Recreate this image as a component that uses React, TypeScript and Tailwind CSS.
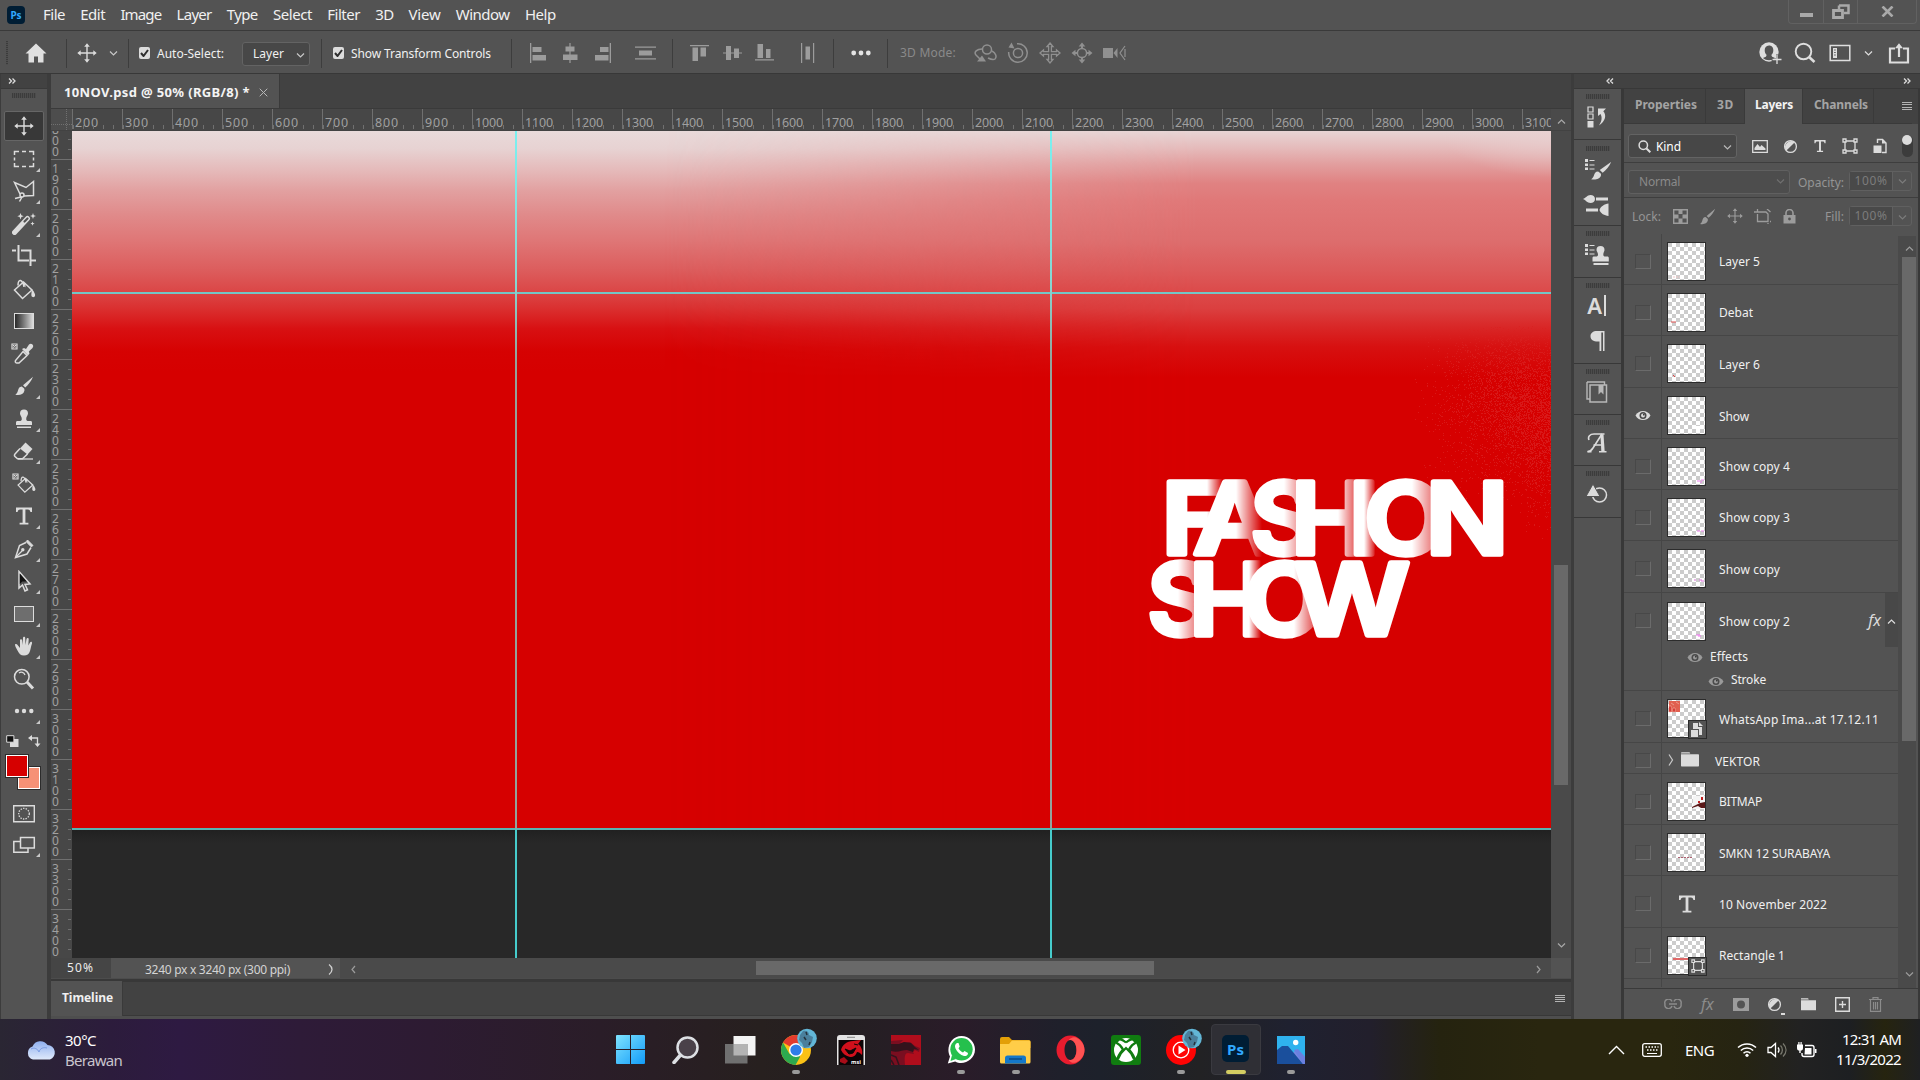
import React, { useLayoutEffect, useRef, useState } from "react";

type Kids = { children?: React.ReactNode };

/* Text set to a known advance width: the tracking is worked out from the measured width. */
function Fit({ w, className = "", children }: { w: number; className?: string; children: string }) {
  const ref = useRef<HTMLSpanElement>(null);
  const [ls, setLs] = useState(0);
  useLayoutEffect(() => {
    const el = ref.current;
    if (!el) return;
    el.style.letterSpacing = "0px";
    setLs((w - el.getBoundingClientRect().width) / children.length);
  }, [w, children]);
  return (
    <span ref={ref} className={"inline-block shrink-0 whitespace-pre " + className} style={{ letterSpacing: ls + "px" }}>
      {children}
    </span>
  );
}

function Svg({ w, h, className = "", children }: { w: number; h: number; className?: string } & Kids) {
  return (
    <svg width={w} height={h} viewBox={`0 0 ${w} ${h}`} fill="none" className={"shrink-0 " + className}>
      {children}
    </svg>
  );
}

const Chev = ({ d = "down", className = "" }: { d?: string; className?: string }) => (
  <Svg w={9} h={9} className={className}>
    <path
      d={d === "down" ? "M1 2.5L4.5 6L8 2.5" : d === "up" ? "M1 6.5L4.5 3L8 6.5" : d === "left" ? "M6 1L3 4.5L6 8" : "M3 1L6 4.5L3 8"}
      stroke="currentColor"
      strokeWidth="1.2"
    />
  </Svg>
);

const Sep = ({ className = "" }: { className?: string }) => <div className={"h-[29px] w-px shrink-0 bg-[#3d3d3d] " + className} />;

/* ------------------------------------------------------------ shared icons */

const MoveIcon = ({ s = 20 }: { s?: number }) => (
  <svg width={s} height={s} viewBox="0 0 20 20" className="shrink-0" fill="currentColor">
    <path d="M9.3 3h1.4v14H9.3zM3 9.3h14v1.4H3z" />
    <path d="M10 .3l2.8 3.4H7.2zM10 19.7l2.8-3.4H7.2zM.3 10l3.4-2.8v5.6zM19.7 10l-3.4-2.8v5.6z" />
  </svg>
);
const TypeIcon = ({ s = 20 }: { s?: number }) => (
  <svg width={s} height={s} viewBox="0 0 20 20" className="shrink-0" fill="currentColor">
    <path d="M2 1.5h16V6h-1.6c-.2-1.7-.8-2.6-2.6-2.6h-2.4v13.4h3v1.7H5.600v-1.7h3V3.400H6.200C4.400 3.400 3.800 4.300 3.600 6H2z" />
  </svg>
);
const BrushIcon = ({ s = 20 }: { s?: number }) => (
  <svg width={s} height={s} viewBox="0 0 20 20" className="shrink-0" fill="currentColor">
    <path d="M19 .8L9 9.300l2.200 2.300C14.500 8.500 17.500 5 19 .8zM7.800 10.500c-2.600.1-3.300 2-3.900 4.200-.4 1.600-1.200 3-2.600 4 4 .9 8.300-.2 9.100-3.900.2-1.300-.1-2.200-.5-2.500z" />
  </svg>
);
const StampIcon = ({ s = 20 }: { s?: number }) => (
  <svg width={s} height={s} viewBox="0 0 20 20" className="shrink-0" fill="currentColor">
    <path d="M10 .5a4 4 0 014 4c0 2-1.800 3-1.800 5.500 0 1.500.8 2 2.300 2h2c1 0 1.500.7 1.500 1.700V16H2v-2.300c0-1 .5-1.700 1.500-1.700h2c1.500 0 2.300-.5 2.300-2C7.800 7.500 6 6.500 6 4.500a4 4 0 014-4zM3 17.600h14v1.500H3z" />
  </svg>
);
const ShapeIcon = ({ s = 16 }: { s?: number }) => (
  <svg width={s} height={s} viewBox="0 0 16 16" className="shrink-0" fill="none" stroke="currentColor" strokeWidth="1.300">
    <path d="M3 3h10v10H3z" />
    <path d="M1 1h3v3H1zM12 1h3v3h-3zM1 12h3v3H1zM12 12h3v3h-3z" fill="#535353" />
  </svg>
);
const HalfIcon = () => (
  <Svg w={15} h={15}>
    <circle cx="7.500" cy="7.500" r="5.900" stroke="currentColor" strokeWidth="1.300" />
    <path d="M11.800 3.200A6.200 6.200 0 003.200 11.800z" fill="currentColor" />
  </Svg>
);
const EyeIcon = ({ className = "" }: { className?: string }) => (
  <Svg w={16} h={11} className={className}>
    <path d="M.5 5.500C3.500-.5 12.500-.5 15.500 5.500 12.500 11.500 3.500 11.500.5 5.500z" fill="currentColor" />
    <circle cx="8" cy="5.500" r="3.500" fill="#4a4a4a" />
    <circle cx="8" cy="5.500" r="2" fill="currentColor" />
    <circle cx="8.800" cy="4.700" r=".9" fill="#3a3a3a" />
  </Svg>
);
const Hamburger = () => (
  <div className="flex h-[8px] w-[10px] shrink-0 flex-col justify-between">
    <i className="h-px bg-[#b4b4b4]" />
    <i className="h-px bg-[#b4b4b4]" />
    <i className="h-px bg-[#b4b4b4]" />
    <i className="h-px bg-[#b4b4b4]" />
  </div>
);
const FolderIcon = () => (
  <Svg w={18} h={15}>
    <path d="M0 1.200C0 .5.500.2 1 .2h7.500l.8 1.300H0zM0 2.300h17c.6 0 1 .4 1 1V13.500c0 .6-.4 1-1 1H1c-.6 0-1-.4-1-1z" fill="#dcdcdc" />
  </Svg>
);
const Grip = ({ className = "" }: { className?: string }) => (
  <div className={"h-[5px] w-[24px] shrink-0 bg-[repeating-linear-gradient(90deg,#3c3c3c_0_1px,#4c4c4c_1px_2px)] " + className} />
);
const PsLogo = ({ className = "" }: { className?: string }) => (
  <div className={"flex shrink-0 items-center justify-center bg-[#001d34] font-bold text-[#31a8ff] " + className}>Ps</div>
);
const DoubleChev = ({ left = false }: { left?: boolean }) => (
  <Svg w={8} h={6}>
    <path d={left ? "M3.500.5L1 3l2.500 2.500M7 .5L4.500 3L7 5.500" : "M1 .5L3.500 3L1 5.500M4.500.5L7 3L4.500 5.500"} stroke="#dcdcdc" strokeWidth="1.300" />
  </Svg>
);

/* ---------------------------------------------------------------- top bars */

const menus: [string, number][] = [
  ["File", 22], ["Edit", 25], ["Image", 41], ["Layer", 35], ["Type", 31], ["Select", 39],
  ["Filter", 33], ["3D", 18], ["View", 32], ["Window", 54], ["Help", 31],
];

function MenuBar() {
  return (
    <div className="flex h-[30px] shrink-0 items-center bg-[#535353] pl-[7px]">
      <PsLogo className="h-[18px] w-[18px] rounded-[4px] text-[10px]" />
      <div className="mb-[2px] ml-[18px] flex items-center gap-[15.2px] text-[15px] text-[#f0f0f0]">
        {menus.map(([m, w]) => (
          <Fit key={m} w={w}>{m}</Fit>
        ))}
      </div>
      <div className="mr-[3px] ml-auto flex h-[24px] w-[129px] self-start rounded-b-[4px] border border-t-0 border-[#616161] text-[#a9a9a9]">
        <div className="flex w-[35px] items-center justify-center border-r border-[#616161]">
          <i className="mt-[6px] h-[4px] w-[13px] bg-[#a9a9a9]" />
        </div>
        <div className="flex w-[34px] items-center justify-center border-r border-[#616161]">
          <Svg w={18} h={16}>
            <path d="M7 1.500h9.500v7.500H12M7 1.500V5" stroke="currentColor" strokeWidth="2.500" />
            <path d="M1.500 6.500h9v7h-9z" stroke="currentColor" strokeWidth="2.800" />
          </Svg>
        </div>
        <div className="flex flex-1 items-center justify-center">
          <Svg w={13} h={11}>
            <path d="M1.500.5l10 10M11.500.5l-10 10" stroke="currentColor" strokeWidth="2.600" />
          </Svg>
        </div>
      </div>
    </div>
  );
}

const Check = ({ className = "" }: { className?: string }) => (
  <div className={"flex h-[12px] w-[11px] shrink-0 items-center justify-center rounded-[2px] bg-[#dcdcdc] " + className}>
    <Svg w={9} h={8}>
      <path d="M1 4l2.500 3L8 1" stroke="#2e2e2e" strokeWidth="2" />
    </Svg>
  </div>
);

function OptionsBar() {
  return (
    <div className="flex h-[42px] shrink-0 items-center bg-[#535353] pt-[2px]">
      <div className="ml-[6px] h-[24px] w-[2px] bg-[repeating-linear-gradient(180deg,#3c3c3c_0_1px,#4f4f4f_1px_2px)]" />
      <Svg w={22} h={20} className="ml-[17px] text-[#e0e0e0]">
        <path d="M11 .5L.5 10.500h3V19.500h5.500V13.500h4V19.500h5.500V10.500h3z" fill="currentColor" />
      </Svg>
      <Sep className="ml-[19px]" />
      <div className="ml-[10px] text-[#dcdcdc]"><MoveIcon /></div>
      <Chev className="ml-[12px] text-[#c8c8c8]" />
      <Sep className="ml-[10px]" />
      <Check className="ml-[10px]" />
      <Fit w={67} className="mt-[2px] ml-[7px] text-[12px] text-[#f0f0f0]">Auto-Select:</Fit>
      <div className="mt-[2px] ml-[18px] flex h-[24px] w-[68px] items-center justify-between rounded-[3px] border border-[#636363] bg-[#474747] pr-[4px] pl-[10px] text-[12px] text-[#f0f0f0]">
        <Fit w={31}>Layer</Fit>
        <Chev className="mt-[2px] text-[#c8c8c8]" />
      </div>
      <Sep className="ml-[11px]" />
      <Check className="ml-[11px]" />
      <Fit w={140} className="mt-[2px] ml-[7px] text-[12px] text-[#f0f0f0]">Show Transform Controls</Fit>
      <Sep className="ml-[20px]" />
      <div className="ml-[16px] flex items-center text-[#9c9c9c]">
        <Svg w={20} h={20}><path d="M2 0h1.300v20H2zM4.500 4h9v5h-9zM4.500 12h13.500v5.500H4.500z" fill="currentColor" /></Svg>
        <Svg w={20} h={20} className="ml-[12px]"><path d="M9.400 0h1.200v20H9.400zM5.500 3.500h9v5h-9zM3 11.500h14.500V17H3z" fill="currentColor" /></Svg>
        <Svg w={20} h={20} className="ml-[13px]"><path d="M16.700 0H18v20h-1.300zM7 4h8.500v5H7zM2 12h13.500v5.500H2z" fill="currentColor" /></Svg>
        <Svg w={22} h={20} className="ml-[22px]"><path d="M0 3.500h21v1.200H0zM0 15.300h21v1.200H0zM4 7.500h13v5H4z" fill="currentColor" /></Svg>
      </div>
      <Sep className="ml-[15px]" />
      <div className="ml-[17px] flex items-center text-[#9c9c9c]">
        <Svg w={20} h={20}><path d="M0 2h19v1.200H0zM2.500 4.500H8V18H2.500zM10.500 4.500H16V13.500h-5.500z" fill="currentColor" /></Svg>
        <Svg w={20} h={20} className="ml-[13px]"><path d="M0 9.400h19v1.200H0zM3 3h5v14H3zM11 5.500h5V15h-5z" fill="currentColor" /></Svg>
        <Svg w={20} h={20} className="ml-[12px]"><path d="M0 16.300h19v1.200H0zM2.500 1H8V15H2.500zM11 6h4.500v9H11z" fill="currentColor" /></Svg>
        <Svg w={20} h={20} className="ml-[23px]"><path d="M3 0h1.200v20H3zM15 0h1.200v20H15zM7.500 3.500h4.500v13H7.500z" fill="currentColor" /></Svg>
      </div>
      <Sep className="ml-[15px]" />
      <Svg w={20} h={6} className="ml-[17px]">
        <g fill="#e4e4e4"><circle cx="2.700" cy="3" r="2.400" /><circle cx="10" cy="3" r="2.400" /><circle cx="17.300" cy="3" r="2.400" /></g>
      </Svg>
      <Sep className="ml-[16px]" />
      <Fit w={56} className="ml-[12px] text-[12px] text-[#8a8a8a]">3D Mode:</Fit>
      <div className="ml-[18px] flex items-center gap-[10px] text-[#909090]">
        <Svg w={23} h={20}>
          <circle cx="13" cy="6.500" r="4.500" stroke="currentColor" strokeWidth="1.500" />
          <path d="M8 6C3 6-.5 9 2 12l4 4M18 8c4 2 5 6 3 8-2 1.500-5 0-7-1" stroke="currentColor" strokeWidth="1.500" />
          <path d="M3 18.500l9 0-4-6z" fill="currentColor" />
        </Svg>
        <Svg w={22} h={22}>
          <circle cx="11" cy="11" r="4.600" stroke="currentColor" strokeWidth="1.500" />
          <path d="M10 1.700a9.300 9.300 0 11-8.300 8.300" stroke="currentColor" strokeWidth="1.500" />
          <path d="M1.500 5.500L7.500 6.500 4.500.5z" fill="currentColor" />
        </Svg>
        <Svg w={22} h={22}>
          <path d="M11 1l3 3.500h-1.600v5.100h5.100V8L21 11l-3.500 3v-1.600h-5.100v5.100H14L11 21l-3-3.500h1.600v-5.100H4.500V14L1 11l3.500-3v1.600h5.100V4.500H8z" stroke="currentColor" strokeWidth="1.300" />
        </Svg>
        <Svg w={22} h={22}>
          <circle cx="11" cy="11" r="4.600" stroke="currentColor" strokeWidth="1.500" />
          <path d="M11 .5l3.300 4H12v2h-2v-2H7.700zM11 21.500l3.300-4H12v-2h-2v2H7.700zM.5 11l4-3.300V10h2v2h-2v2.300zM21.500 11l-4-3.300V10h-2v2h2v2.300z" fill="currentColor" />
        </Svg>
        <Svg w={23} h={20}>
          <path d="M0 5h10v10H0zM10.500 10l4-5v10z" fill="currentColor" />
          <path d="M22 3l-5 7 5 7M22 6v8" stroke="currentColor" strokeWidth="1.200" />
        </Svg>
      </div>
      <div className="mr-[10px] ml-auto flex items-center text-[#dedede]">
        <Svg w={24} h={24}>
          <circle cx="11" cy="11" r="9.700" fill="currentColor" />
          <path d="M11 4.500c-3 0-4.300 2.200-4.300 4.700 0 2 .8 3.500 1.800 4.600.3 1.700-.9 2.400-3.500 3.200 1.700 1.500 3.700 2.200 6 2.200s4.300-.7 6-2.200c-2.600-.8-3.800-1.500-3.500-3.200 1-1.100 1.800-2.600 1.800-4.600 0-2.500-1.300-4.700-4.300-4.700z" fill="#535353" />
          <path d="M13.500 17.500H18V13.500h6V24H14z" fill="#535353" />
          <path d="M19 14v9M14.500 18.500h9" stroke="currentColor" strokeWidth="1.300" />
        </Svg>
        <Svg w={22} h={22} className="ml-[12px]">
          <circle cx="9.500" cy="9.500" r="7.800" stroke="currentColor" strokeWidth="1.900" />
          <path d="M15 15l5.500 5" stroke="currentColor" strokeWidth="2.600" />
        </Svg>
        <Svg w={22} h={18} className="ml-[13px]">
          <path d="M1.200 1.500h19.600v15H1.200z" stroke="currentColor" strokeWidth="1.500" />
          <path d="M4 4h4v10H4z" fill="currentColor" />
          <path d="M5.200 6h1.500M5.200 8.500h1.500M5.200 11h1.500" stroke="#535353" />
        </Svg>
        <Chev className="ml-[13px]" />
        <Svg w={22} h={21} className="ml-[15px]">
          <path d="M7 5.500H2V19.500H20V5.500h-5" stroke="currentColor" strokeWidth="2.200" />
          <path d="M9.900 5h2.200v9H9.900zM11 .2l4 5H7z" fill="currentColor" />
        </Svg>
      </div>
    </div>
  );
}

/* ------------------------------------------------------------ left toolbar */

const Checker = () => (
  <g>
    <path d="M1 1h5v5H1z" stroke="#dcdcdc" strokeWidth="1.200" />
    <path d="M2 2h1.300v1.300H2zM4 2h1.300v1.300H4zM3 3.300h1v1H3zM2 4.300h1v1H2zM4.300 4.300h1v1h-1z" fill="#dcdcdc" />
  </g>
);
const Bucket = () => (
  <g>
    <path d="M11.500 4L20 12 10.500 20.500 2.500 12z" stroke="currentColor" strokeWidth="1.500" />
    <path d="M6 7.500C6 4 7 2 8.500 2.500S11.500 6 12 9" stroke="currentColor" strokeWidth="1.500" />
    <path d="M17 9l4.500 4c1 2 2 3.500 1.500 5-.5 1.600-3 1.500-3.500 0-.3-1.500 0-3 .2-5z" fill="currentColor" />
    <path d="M9.500 3.500l4 6V5.500z" fill="currentColor" />
  </g>
);

const tools: { key: string; corner: boolean; icon: React.ReactNode }[] = [
  { key: "move", corner: false, icon: <MoveIcon /> },
  { key: "marquee", corner: true, icon: <Svg w={22} h={18}><path d="M1.500 5V1.500H6M9 1.500h4M16 1.500h4.500V5M20.500 7.500v3M20.500 13v3.500H16M13 16.500H9M6 16.500H1.500V13M1.500 10.500v-3" stroke="currentColor" strokeWidth="1.500" /></Svg> },
  { key: "lasso", corner: true, icon: <Svg w={22} h={22}><path d="M7 14L1.500 2.500 13 7.500 20.500 1.500V15.500L11 16" stroke="currentColor" strokeWidth="1.500" /><circle cx="9" cy="15" r="2" stroke="currentColor" strokeWidth="1.500" /><path d="M8 17l-6 1.500M9 17l-2.500 4.500" stroke="currentColor" strokeWidth="1.500" /></Svg> },
  { key: "wand", corner: true, icon: <Svg w={24} h={22}><path d="M2.500 19.500L15.500 5.500" stroke="currentColor" strokeWidth="5" strokeLinecap="round" /><path d="M12.500 8.500l3-3" stroke="#535353" strokeWidth="2.200" strokeLinecap="round" /><path d="M8.500 0l.9 2.300 2.300.9-2.300.9-.9 2.300-.9-2.300L5.300 3.200l2.300-.9zM21 0l.8 2.200 2.200.8-2.200.8L21 6l-.8-2.200L18 3l2.200-.8zM20.500 8.500l.6 1.500 1.500.6-1.500.6-.6 1.500-.6-1.500-1.500-.6 1.500-.6z" fill="currentColor" /></Svg> },
  { key: "crop", corner: false, icon: <Svg w={24} h={22}><path d="M6.500 0V15.500H17M19.500 15.500H24M0 5.500H4M9 5.500h9.500V21" stroke="currentColor" strokeWidth="2" /></Svg> },
  { key: "bucket", corner: false, icon: <Svg w={24} h={22}><Bucket /></Svg> },
  { key: "gradient", corner: false, icon: <div className="h-[16px] w-[20px] border-[1.5px] border-[#dcdcdc] bg-linear-to-r from-[#2a2a2a] to-[#dcdcdc]" /> },
  { key: "sampler", corner: false, icon: <Svg w={24} h={21} className="mr-[3px]"><Checker /><path d="M12 8.500l4 4L8 20H5.500C4.500 20 4 19 4.500 17.500z" stroke="currentColor" strokeWidth="1.500" /><path d="M11 6l2-1 2 1 3-4.500c2-2 5 0 4 2.500-.5 1.500-3 3-4.200 4.500l.7 2-1.500 2z" fill="currentColor" /></Svg> },
  { key: "brush", corner: true, icon: <BrushIcon /> },
  { key: "stamp", corner: true, icon: <StampIcon /> },
  { key: "eraser", corner: true, icon: <Svg w={22} h={20}><path d="M12.500 1.500l7 6.500-5 5.500-7.500-6z" fill="currentColor" /><path d="M7 7.500l-5 5.500c-.8.900-.7 1.700 0 2.500l2.500 2.300h5l5-4.800" stroke="currentColor" strokeWidth="1.500" /><path d="M5 18h15" stroke="currentColor" strokeWidth="1.300" /></Svg> },
  { key: "pattern", corner: false, icon: <Svg w={24} h={22}><Checker /><g transform="translate(4 2) scale(.84)"><Bucket /></g></Svg> },
  { key: "type", corner: true, icon: <TypeIcon /> },
  { key: "pen", corner: true, icon: <Svg w={20} h={20}><path d="M13.500 1l5.500 5.500-1.800 1.300L12.200 2.700z" fill="currentColor" stroke="currentColor" /><path d="M12 3.500L5.500 6.500 1.500 18.500 13 15l4-6.500" stroke="currentColor" strokeWidth="1.500" /><path d="M2 18l6-6" stroke="currentColor" strokeWidth="1.300" /><circle cx="8.800" cy="10.800" r="1.700" fill="currentColor" /></Svg> },
  { key: "select", corner: true, icon: <Svg w={20} h={22}><path d="M5 1.500V18l3.500-3 2.500 6 2.500-1.200-2.500-5.300 5-.5z" fill="#535353" stroke="currentColor" strokeWidth="1.500" /><path d="M5.800 3.500v10.500l2.500-2.500 4.500 0z" fill="#111" /></Svg> },
  { key: "rect", corner: true, icon: <div className="h-[16px] w-[20px] border-[1.5px] border-[#dcdcdc] bg-[#6e6e6e]" /> },
  { key: "hand", corner: true, icon: <Svg w={20} h={20}><path d="M1 8.500c.8-.8 2-.3 2.800.7L6 12V4.300c0-1.500 2-1.500 2.100 0L8.500 9l.5-7c.1-1.600 2.200-1.600 2.200 0L11.500 9l1-6c.3-1.500 2.300-1.300 2.200.2L14.300 9.500l1.700-3c.8-1.300 2.500-.5 2 1-1 3-1.300 5-2 7.500-.8 3-3 4.500-6 4.500-3.500 0-5-2-6.500-5C2.500 12.500 1 10.500 1 8.500z" fill="currentColor" /></Svg> },
  { key: "zoom", corner: false, icon: <Svg w={22} h={22}><circle cx="8.800" cy="8.800" r="7.300" stroke="currentColor" strokeWidth="1.500" /><path d="M6 5c2-1.500 5-.8 6 2" stroke="currentColor" strokeWidth="1.200" /><path d="M14 14l6 6.500" stroke="currentColor" strokeWidth="3" /></Svg> },
  { key: "more", corner: true, icon: <Svg w={20} h={6}><g fill="#dcdcdc"><circle cx="3" cy="3" r="2.200" /><circle cx="10" cy="3" r="2.200" /><circle cx="17.300" cy="3" r="2.200" /></g></Svg> },
];

function Toolbar() {
  return (
    <div className="flex w-[51px] shrink-0 border-r-[2px] border-[#3c3c3c] bg-[#3c3c3c] pl-px">
      <div className="flex w-[46px] flex-col bg-[#535353]">
        <div className="flex h-[14px] shrink-0 items-center bg-[#424242] pl-[7px]"><DoubleChev /></div>
        <div className="h-px bg-[#3a3a3a]" />
        <Grip className="mt-[4px] ml-[11px]" />
        <div className="mt-[12px] flex flex-col text-[#dcdcdc]">
          {tools.map((t) => (
            <div key={t.key} className="flex h-[32.5px] items-center">
              <div
                className={
                  "relative ml-[3px] flex h-[30px] w-[40px] items-center justify-center " +
                  (t.key === "move" ? "rounded-[2px] border border-[#666] bg-[#383838]" : "")
                }
              >
                {t.icon}
                {t.corner && (
                  <svg width="4" height="4" className="absolute right-[4px] bottom-[2px]"><path d="M4 0v4H0z" fill="#c8c8c8" /></svg>
                )}
              </div>
            </div>
          ))}
        </div>
        <div className="mt-[7px] flex justify-between pr-[6px] pl-[5px]">
          <Svg w={13} h={12}><path d="M4 4h8.500v8H4z" fill="#dcdcdc" /><path d="M.7.700h7.200v6.500H.7z" fill="#111" stroke="#dcdcdc" /></Svg>
          <Svg w={13} h={12}><path d="M3 3h6.500v6" stroke="#dcdcdc" strokeWidth="1.300" /><path d="M4 0v6L0 3zM6.500 8.500h6L9.500 12z" fill="#dcdcdc" /></Svg>
        </div>
        <div className="relative mt-[7px] ml-[4px] h-[37px] w-[37px]">
          <div className="absolute top-[12px] left-[12px] h-[24px] w-[24px] border border-[#2c2c2c] bg-white p-px"><div className="h-full bg-[#f69176]" /></div>
          <div className="absolute top-0 left-0 h-[24px] w-[24px] border border-[#2c2c2c] bg-white p-px"><div className="h-full bg-[#d60000]" /></div>
        </div>
        <div className="mt-[14px] ml-[12px] flex flex-col gap-[13px]">
          <Svg w={22} h={18}>
            <path d="M.7.800h20.600v15.900H.7z" stroke="#dcdcdc" strokeWidth="1.400" />
            <circle cx="11" cy="8.700" r="5.300" stroke="#dcdcdc" strokeWidth="1.300" strokeDasharray="1.400 1.200" />
          </Svg>
          <Svg w={27} h={21}>
            <path d="M7.500 5.500H.8V16.300H15v-4" stroke="#dcdcdc" strokeWidth="1.500" />
            <path d="M7.500 1.500h13.800v10.500H7.500z" fill="#535353" stroke="#dcdcdc" strokeWidth="1.500" />
            <path d="M27 17v4h-4z" fill="#c8c8c8" />
          </Svg>
        </div>
      </div>
    </div>
  );
}

/* --------------------------------------------------------- document window */

const hMarks = Array.from({ length: 30 }, (_, i) => 200 + i * 100);
const vMarks = Array.from({ length: 17 }, (_, i) => 1800 + i * 100);

const Ticks = () => (
  <div className="absolute bottom-0 left-0 h-[4px] w-[50px] bg-[repeating-linear-gradient(90deg,#707070_0_1px,transparent_1px_10px)]" />
);

function HRuler() {
  return (
    <div className="flex h-[21px] shrink-0 bg-[#474747]">
      <div className="relative w-[21px] shrink-0 bg-[#4d4d4d]">
        <i className="absolute top-0 right-[5px] h-full border-r border-dotted border-[#707070]" />
        <i className="absolute bottom-[5px] left-0 w-full border-b border-dotted border-[#707070]" />
      </div>
      <div className="flex w-[1479px] overflow-hidden">
        {hMarks.map((n) => (
          <div key={n} className="relative h-[20px] w-[50px] shrink-0 border-l border-[#707070] pt-[5px] pl-[2px] text-[12.500px] leading-[17px] text-[#a0a0a0]">
            <Fit w={n < 1000 ? 24 : 28}>{String(n)}</Fit>
            <Ticks />
          </div>
        ))}
      </div>
      <div className="flex w-[20px] items-center justify-center bg-[#4a4a4a] pt-[4px] pl-px text-[#a8a8a8]"><Chev d="up" /></div>
    </div>
  );
}

function VRuler() {
  return (
    <div className="w-[21px] shrink-0 overflow-hidden bg-[#474747]">
      <div className="-mt-[22px]">
        {vMarks.map((n) => (
          <div key={n} className="flex h-[50px] justify-between border-t border-[#707070] pt-[3px] pl-[1px] text-[12px] text-[#a0a0a0]">
            <div className="flex flex-col">
              {String(n).split("").map((c, i) => (
                <span key={i} className="h-[11px] leading-[11px]">{c}</span>
              ))}
            </div>
            <div className="-mt-[4px] mr-px h-[50px] w-[3px] bg-[repeating-linear-gradient(180deg,#707070_0_1px,transparent_1px_10px)]" />
          </div>
        ))}
      </div>
    </div>
  );
}

/* Letters of the artwork: glyph, left edge, width, baseline, fade start, fade end, opacity at the end. */
const letters: [string, number, number, number, number, number, number][] = [
  ["F", 1167, 58, 554, 1207, 1223, 0],
  ["A", 1193, 84, 554, 1236, 1262, 0],
  ["S", 1252, 62, 554, 1284, 1298, 0.6],
  ["H", 1296, 68, 554, 1338, 1362, 0.1],
  ["I", 1354, 21, 554, 1364, 1375, 0.1],
  ["O", 1366, 79, 554, 1412, 1436, 0.4],
  ["N", 1431, 72, 554, 1600, 1601, 1],
  ["S", 1149, 62, 634.5, 1178, 1196, 0.5],
  ["H", 1194, 68, 634.5, 1249, 1261, 0],
  ["O", 1246, 77, 634.5, 1294, 1318, 0.2],
  ["W", 1294, 116, 634.5, 1600, 1601, 1],
];

function Letter({ row, i }: { row: (typeof letters)[number]; i: number }) {
  const [c, x, w, y, a, b, o] = row;
  const [box, setBox] = useState({ l: 0, w: 70 });
  useLayoutEffect(() => {
    const ctx = document.createElement("canvas").getContext("2d");
    if (!ctx) return;
    ctx.font = "600 99px Inter";
    const m = ctx.measureText(c);
    setBox({ l: -m.actualBoundingBoxLeft, w: m.actualBoundingBoxLeft + m.actualBoundingBoxRight });
  }, [c]);
  const sx = (w - 5) / box.w;
  return (
    <g mask={`url(#mask${i})`}>
      <linearGradient id={"fade" + i} gradientUnits="userSpaceOnUse" x1={a} x2={b} y1="0" y2="0">
        <stop offset="0" stopColor="#fff" />
        <stop offset="1" stopColor="#fff" stopOpacity={o} />
      </linearGradient>
      <mask id={"mask" + i} maskUnits="userSpaceOnUse" x={x - 10} y={y - 90} width={w + 20} height="110">
        <rect x={x - 10} y={y - 90} width={w + 20} height="110" fill={`url(#fade${i})`} />
      </mask>
      <g transform={`translate(${x + 2.5 - box.l * sx} ${y}) scale(${sx} 1)`}>
        <text fontFamily="Inter" fontWeight="600" fontSize="99" fill="#fff" stroke="#fff" strokeWidth="5.500" strokeLinejoin="round">
          {c}
        </text>
      </g>
    </g>
  );
}

/* Sprayed dots, denser towards the right edge of the artboard. */
const speckles = (() => {
  let s = 7;
  const rnd = () => ((s = (s * 16807) % 2147483647) / 2147483647);
  const g = () => (rnd() + rnd() + rnd()) / 1.5 - 1;
  let d = "";
  for (let i = 0; i < 9000; i++) {
    const x = Math.round(1556 + g() * 150);
    const y = Math.round(400 + g() * 120 + (x > 1525 ? rnd() * 40 : 0));
    if (x < 1551 && y > 325) d += `M${x} ${y}h1v1h-1z`;
  }
  return d;
})();

function Canvas() {
  return (
    <div className="relative w-[1479px] shrink-0 overflow-hidden bg-[#282828]">
      <div className="relative h-[698px] overflow-hidden bg-[linear-gradient(180deg,#e9dada_0px,#e7d2d2_18px,#e5b9b9_40px,#e2a0a0_60px,#e08a8a_84px,#df7676_110px,#dc5c5c_140px,#db4646_161px,#da2c2c_180px,#d81012_198px,#d60202_220px,#d60000_240px)]">
        <div className="absolute inset-0 bg-[linear-gradient(180deg,#e7d4d4_0px,#e5b9b9_18px,#e29d9d_34px,#e08282_52px,#e07878_70px,#dd6d6d_110px,#dc5a5a_140px,#dc4a4a_161px,#db3f3f_178px,#d92828_195px,#d71010_216px,#d60000_246px)] mask-[linear-gradient(90deg,transparent_40%,black_76%)]" />
        <div className="absolute inset-x-0 top-0 h-[70px] bg-[radial-gradient(110px_46px_at_100%_0,#e8d0d0cc,transparent)]" />
      </div>
      <div className="h-[14px] bg-linear-to-b from-[#202020] to-[#282828]" />
      <svg className="absolute top-0 left-0" width="1479" height="827" viewBox="72 131 1479 827">
        <path d={speckles} fill="#da2020" fillOpacity="0.75" />
        {letters.map((l, i) => (
          <Letter key={i} row={l} i={i} />
        ))}
      </svg>
      <i className="absolute top-[161px] left-0 h-[2px] w-full bg-[#74c6c6]" />
      <i className="absolute top-[697px] left-0 h-[2px] w-full bg-[#58b4b2]" />
      <i className="absolute top-0 left-[443px] h-full w-[2px] bg-[linear-gradient(180deg,#7af0f0_0px,#86d8d4_150px,#93a39c_230px,#93a39c_697px,#46cccc_699px)]" />
      <i className="absolute top-0 left-[978px] h-full w-[2px] bg-[linear-gradient(180deg,#7af0f0_0px,#86d8d4_150px,#93a39c_230px,#93a39c_697px,#46cccc_699px)]" />
    </div>
  );
}

function DocumentArea() {
  return (
    <div className="flex w-[1520px] shrink-0 flex-col bg-[#424242]">
      <div className="flex h-[35px] shrink-0 items-center border-b border-[#3a3a3a]">
        <div className="flex h-full w-[229px] items-center border-r border-[#3a3a3a] bg-[#535353] pt-[2px] pl-[13px]">
          <Fit w={186} className="text-[13px] font-bold text-[#f4f4f4]">10NOV.psd @ 50% (RGB/8) *</Fit>
          <Svg w={9} h={9} className="ml-[9px]"><path d="M.7.700l7.600 7.600M8.300.700L.7 8.300" stroke="#b8b8b8" /></Svg>
        </div>
      </div>
      <HRuler />
      <div className="mt-px flex h-[827px] shrink-0">
        <VRuler />
        <Canvas />
        <div className="flex w-[20px] flex-col items-center bg-[#4a4a4a] text-[#a8a8a8]">
          <div className="mt-[434px] h-[220px] w-[14px] bg-[#696969]" />
          <Chev className="mt-auto mb-[8px] ml-px" />
        </div>
      </div>
      <div className="flex h-[20px] shrink-0 items-center bg-[#4a4a4a] text-[12px]">
        <div className="flex h-full w-[60px] items-center bg-[#454545] pb-px pl-[16px] text-[#ececec]"><Fit w={27}>50%</Fit></div>
        <div className="flex h-full w-[229px] items-center bg-[#535353] pl-[34px] text-[#d4d4d4]">
          <Fit w={145} className="mt-[3px]">3240 px x 3240 px (300 ppi)</Fit>
          <Svg w={6} h={11} className="mt-[2px] ml-[38px]"><path d="M1 .5c4 3 4 7 0 10" stroke="#d0d0d0" strokeWidth="1.300" /></Svg>
        </div>
        <Chev d="left" className="mt-[2px] ml-[9px] text-[#9c9c9c]" />
        <div className="ml-[398px] h-[14px] w-[398px] bg-[#696969]" />
        <Chev d="right" className="mt-[2px] ml-[380px] text-[#9c9c9c]" />
        <div className="ml-auto h-full w-[20px] bg-[#535353]" />
      </div>
      <div className="h-[4px] shrink-0 border-t border-[#4c4c4c] bg-[#383838]" />
      <div className="flex h-[34px] shrink-0 items-center border-b border-[#383838] pr-[6px]">
        <div className="flex h-[36px] w-[72px] items-center border-r border-[#3a3a3a] bg-[#535353] pb-[2px] pl-[11px]">
          <Fit w={51} className="text-[12px] font-bold text-[#f0f0f0]">Timeline</Fit>
        </div>
        <div className="ml-auto"><Hamburger /></div>
      </div>
      <div className="min-h-0 flex-1 bg-[#4e4e4e]" />
    </div>
  );
}

/* -------------------------------------------------------------- icon strip */

const DotList = () => <path d="M0 0h3v3H0zM0 4.500h3v2.500H0zM0 8.500h3v2.500H0zM4.500 1h5v1h-5zM4.500 5.500h5v1h-5zM4.500 9.500h5v1h-5z" fill="#dcdcdc" />;

const Group = ({ className, children }: { className: string } & Kids) => (
  <div className={"flex shrink-0 flex-col items-center border-b border-[#383838] pt-[5px] text-[#dcdcdc] " + className}>
    <Grip />
    {children}
  </div>
);

function IconStrip() {
  return (
    <div className="flex w-[47px] shrink-0 flex-col bg-[#535353]">
      <Group className="h-[51px]">
        <Svg w={20} h={22} className="mt-[7px] mr-[2px]">
          <path d="M1 1h5v5H1zM1 8h5v5H1z" stroke="currentColor" strokeWidth="1.200" /><path d="M.5 15h6v6.500h-6z" fill="currentColor" />
          <path d="M11 10V2.500h8l-2.700 2.700c3.500 4 2.200 9.800-4.300 14.300 3-4.500 3.300-8.500 1.500-11.500z" fill="currentColor" />
        </Svg>
      </Group>
      <Group className="h-[86px] pt-[6px]">
        <Svg w={26} h={22} className="mt-[8px]">
          <DotList />
          <g transform="translate(4.500 3) scale(1.080 .95)"><path d="M20 0L9.500 8.500 12.200 11.300C15.500 8.500 18.500 4.500 20 0zM8 10c-2.600.1-3.300 2-3.900 4.200-.4 1.600-1.200 3-2.600 4 4 .9 8.300-.2 9.100-3.900.2-1.300-.1-2.200-.5-2.500z" fill="currentColor" /></g>
        </Svg>
        <Svg w={27} h={21} className="mt-[14px] mr-[2px]">
          <path d="M0 4c3-1 4-4 7.500-4C10 0 12 1.500 12 4s-2 4-4.500 4C4 8 3 5 0 4zM13 2.500h12v3H13zM3 13.500h12v3H3zM25.500 8.500v12.500c-4-.5-8-2.500-9-6 1-3.500 5-6 9-6.500z" fill="currentColor" />
        </Svg>
      </Group>
      <Group className="h-[52px]">
        <Svg w={25} h={22} className="mt-[8px]">
          <DotList />
          <path d="M15.500 2a4 4 0 014 4c0 1.500-1.200 2.500-1.200 4.500 0 1.500.7 2 2 2h2c1 0 1.500.6 1.500 1.500v3.500H7.500V14c0-1 .5-1.500 1.500-1.500h2c1.300 0 2-.5 2-2C13 8.500 11.500 7.500 11.500 6a4 4 0 014-4zM8.500 19h15v2h-15z" fill="currentColor" />
        </Svg>
      </Group>
      <Group className="h-[86px]">
        <div className="mt-[6px] -ml-[2px] flex items-center">
          <span className="font-['Noto_Sans'] text-[22px] leading-[22px] font-semibold">A</span>
          <i className="ml-[2px] h-[21px] w-[1.500px] bg-[#dcdcdc]" />
        </div>
        <Svg w={15} h={20} className="mt-[15px]"><path d="M14.500 0v20H13V1.500h-1.700V20H9.500V10.500C4 11 .5 9 .5 5.300.5 2 3 0 7 0z" fill="currentColor" /></Svg>
      </Group>
      <Group className="h-[51px]">
        <Svg w={22} h={22} className="mt-[7px] mr-[2px] text-[#b8b8b8]">
          <path d="M1 1h17.500v3M1 1v17h3" stroke="currentColor" strokeWidth="1.400" /><path d="M4 4h16.500v17H4z" stroke="currentColor" strokeWidth="1.500" /><path d="M12.500 4h5v9.500l-2.500-2.500-2.500 2.500z" fill="currentColor" />
        </Svg>
      </Group>
      <Group className="h-[51px]">
        <Svg w={20} h={20} className="mt-[8px] mr-[2px]">
          <path d="M2 7C.5 3.500 3 1 7 1h10.500" stroke="currentColor" strokeWidth="1.600" />
          <path d="M14.500 1l1 17M15 1L6 15c-1.500 2.500-3 3.500-5.500 3.500" stroke="currentColor" strokeWidth="1.600" />
          <path d="M13.300 1.500h3.200l1.200 17h-3.200z" fill="currentColor" />
          <path d="M6.500 12h8M12 18.800h7.500M.5 18.800h4" stroke="currentColor" strokeWidth="1.400" />
        </Svg>
      </Group>
      <Group className="h-[52px]">
        <Svg w={22} h={19} className="mt-[8px] mr-[2px]"><circle cx="13.500" cy="11" r="7" stroke="currentColor" strokeWidth="1.500" /><path d="M7 0l7 12.500H0z" fill="currentColor" stroke="#535353" /></Svg>
      </Group>
    </div>
  );
}

/* ------------------------------------------------------------ layers panel */

const HideBox = () => <div className="h-[15px] w-[16px] border border-[#484848] border-r-[#6b6b6b] border-b-[#6b6b6b]" />;

const Thumb = ({ children }: Kids) => (
  <div className="relative h-[39px] w-[39px] shrink-0 border border-[#2c2c2c] bg-[conic-gradient(#fff_25%,#ccc_0_50%,#fff_0_75%,#ccc_0)] bg-[length:8px_8px]">
    <svg width="37" height="37" className="absolute top-0 left-0">{children}</svg>
  </div>
);

const Badge = ({ children }: Kids) => (
  <div className="absolute -right-px -bottom-px flex h-[19px] w-[19px] items-center justify-center border border-[#2c2c2c] bg-[#535353] text-[#dcdcdc]">{children}</div>
);

function Row({ h, on = false, children }: { h: string; on?: boolean } & Kids) {
  return (
    <div className={"flex shrink-0 border-b border-[#464646] " + h}>
      <div className="flex w-[38px] shrink-0 items-center justify-center border-r border-[#464646] pt-[4px]">
        {on ? <EyeIcon className="text-[#dcdcdc]" /> : <HideBox />}
      </div>
      <div className="flex flex-1 items-center pt-[4px] pl-[5px] text-[12px] text-[#f0f0f0]">{children}</div>
    </div>
  );
}

function Layers() {
  return (
    <div className="flex min-h-0 flex-1">
      <div className="flex w-[274px] flex-col overflow-hidden">
        <Row h="h-[51px]"><Thumb><path d="M5 34h2M8 34h2M11 34h1" stroke="#f3c8c8" /></Thumb><Fit w={41} className="mt-[2px] ml-[13px]">Layer 5</Fit></Row>
        <Row h="h-[51px]"><Thumb><path d="M3 28h5" stroke="#e05050" /></Thumb><Fit w={34} className="mt-[2px] ml-[13px]">Debat</Fit></Row>
        <Row h="h-[52px]"><Thumb><path d="M5 30.500h1M6 31.500h1" stroke="#e04040" /></Thumb><Fit w={41} className="mt-[3px] ml-[13px]">Layer 6</Fit></Row>
        <Row h="h-[51px]" on><Thumb><path d="M27 29h8v3h-8z" fill="#fff" /></Thumb><Fit w={30} className="mt-[4px] ml-[13px]">Show</Fit></Row>
        <Row h="h-[51px]"><Thumb><path d="M29 33h3M33 32h3M32 34h2" stroke="#ee80ee" /></Thumb><Fit w={71} className="mt-[2px] ml-[13px]">Show copy 4</Fit></Row>
        <Row h="h-[51px]"><Thumb><path d="M29 32h3M33 32h3" stroke="#ee80ee" /></Thumb><Fit w={71} className="mt-[2px] ml-[13px]">Show copy 3</Fit></Row>
        <Row h="h-[52px]"><Thumb><path d="M26 30h2M31 30h3M33 31h3" stroke="#dd70dd" /></Thumb><Fit w={61} className="mt-[3px] ml-[13px]">Show copy</Fit></Row>
        <div className="flex h-[98px] shrink-0 border-b border-[#464646] text-[12px] text-[#f0f0f0]">
          <div className="flex w-[38px] shrink-0 justify-center border-r border-[#464646] pt-[20px]"><HideBox /></div>
          <div className="flex flex-1 flex-col">
            <div className="flex h-[54px] items-center pl-[5px]">
              <div className="mt-[2px]"><Thumb><path d="M28 32h4M30 33h3" stroke="#f070f0" /></Thumb></div>
              <Fit w={71} className="mt-[4px] ml-[13px]">Show copy 2</Fit>
              <span className="mr-[4px] ml-auto text-[16px] text-[#dcdcdc] italic">fx</span>
              <div className="flex h-full w-[13px] items-center justify-center bg-[#484848] text-[#dcdcdc]"><Chev d="up" className="mt-[2px]" /></div>
            </div>
            <div className="flex h-[20px] items-center pl-[25px] text-[#9a9a9a]"><EyeIcon className="mt-px" /><Fit w={38} className="ml-[7px] text-[#f0f0f0]">Effects</Fit></div>
            <div className="mt-[3px] flex h-[20px] items-center pl-[46px] text-[#9a9a9a]"><EyeIcon className="mt-[2px]" /><Fit w={35} className="ml-[7px] text-[#f0f0f0]">Stroke</Fit></div>
          </div>
        </div>
        <Row h="h-[52px]">
          <div className="relative">
            <Thumb>
              <path d="M1 1h11v11H1z" fill="#e06050" /><path d="M1 6h2v6H1zM5 8h2v4H5zM8 2l3 2M3 3l3 2" fill="#c80808" stroke="#f6c0b0" strokeWidth=".6" />
            </Thumb>
            <Badge><Svg w={15} h={15}><path d="M3 1h5v4h4v8H9V7H3z" fill="currentColor" /><path d="M9 0l4 4H9zM1 8h7v7H1z" fill="currentColor" /></Svg></Badge>
          </div>
          <Fit w={160} className="mt-[3px] ml-[13px]">WhatsApp Ima...at 17.12.11</Fit>
        </Row>
        <Row h="h-[31px]">
          <Svg w={6} h={12} className="ml-[1px]"><path d="M1 .5l3.500 5.500L1 11.500" stroke="#c8c8c8" strokeWidth="1.200" /></Svg>
          <div className="mb-[2px] ml-[7px]"><FolderIcon /></div>
          <Fit w={45} className="mt-[3px] ml-[16px]">VEKTOR</Fit>
        </Row>
        <Row h="h-[51px]">
          <Thumb><path d="M25 13h12v13H25z" fill="#f4f4f4" /><path d="M33 14h2v3h-2zM30 18h2v2h-2z" fill="#c02020" /><path d="M24 24l8-4 5-1v6h-4l-3-2-6 2z" fill="#5a1818" /></Thumb>
          <Fit w={43} className="mt-[2px] ml-[13px]">BITMAP</Fit>
        </Row>
        <Row h="h-[51px]"><Thumb><path d="M10 23.500h14" stroke="#b06070" strokeDasharray="2 1" /></Thumb><Fit w={111} className="mt-[3px] ml-[13px]">SMKN 12 SURABAYA</Fit></Row>
        <Row h="h-[52px]">
          <div className="flex w-[39px] justify-center text-[#dcdcdc]"><TypeIcon /></div>
          <Fit w={108} className="mt-[3px] ml-[13px]">10 November 2022</Fit>
        </Row>
        <Row h="h-[51px]">
          <div className="relative"><Thumb><path d="M5 21h20v2H5z" fill="#e06868" /></Thumb><Badge><ShapeIcon s={14} /></Badge></div>
          <Fit w={66} className="mt-[2px] ml-[13px]">Rectangle 1</Fit>
        </Row>
        <div className="h-[8px] w-[38px] shrink-0 border-r border-[#464646]" />
      </div>
      <div className="mt-[2px] flex w-[18px] flex-col items-center bg-[#4a4a4a] text-[#9c9c9c]">
        <Chev d="up" className="mt-[8px] ml-[4px]" />
        <div className="mt-[4px] ml-[3px] h-[484px] w-[14px] bg-[#696969]" />
        <Chev className="mt-auto mb-[9px] ml-[4px]" />
      </div>
    </div>
  );
}

const Pct = ({ className }: { className: string }) => (
  <div className={"flex shrink-0 rounded-[3px] border border-[#606060] text-[12px] text-[#7c7c7c] " + className}>
    <div className="flex w-[43px] items-center justify-center border-r border-[#606060] bg-[#494949]"><Fit w={33}>100%</Fit></div>
    <div className="flex flex-1 items-center justify-center"><Chev className="mt-[2px]" /></div>
  </div>
);

function LayersPanel() {
  return (
    <div className="flex w-[294px] shrink-0 flex-col bg-[#535353]">
      <div className="flex h-[35px] shrink-0 bg-[#424242] pr-[6px] text-[12px] font-bold text-[#a4a4a4]">
        <div className="flex w-[82px] items-center border-r border-b border-[#3a3a3a] pb-[2px] pl-[11px]"><Fit w={62}>Properties</Fit></div>
        <div className="flex w-[39px] items-center border-r border-b border-[#3a3a3a] pb-[2px] pl-[11px]"><Fit w={17}>3D</Fit></div>
        <div className="flex w-[58px] items-center border-r border-[#3a3a3a] bg-[#535353] pb-[3px] pl-[10px] text-[#f4f4f4]"><Fit w={38}>Layers</Fit></div>
        <div className="flex w-[71px] items-center border-r border-b border-[#3a3a3a] pb-[2px] pl-[11px]"><Fit w={54}>Channels</Fit></div>
        <div className="flex flex-1 items-center justify-end border-b border-[#3a3a3a]"><Hamburger /></div>
      </div>
      <div className="flex h-[39px] shrink-0 items-center border-b border-[#3e3e3e] pt-[6px] pl-[4px] text-[#dcdcdc]">
        <div className="flex h-[24px] w-[109px] items-center rounded-[3px] border border-[#636363] bg-[#474747] pr-[4px] pl-[9px] text-[12px] text-white">
          <Svg w={13} h={13}><circle cx="5.300" cy="5.300" r="4.200" stroke="#dcdcdc" strokeWidth="1.500" /><path d="M8.500 8.500l3.800 3.800" stroke="#dcdcdc" strokeWidth="2" /></Svg>
          <Fit w={25} className="mt-px ml-[5px]">Kind</Fit>
          <Chev className="mt-[2px] ml-auto text-[#b8b8b8]" />
        </div>
        <div className="ml-[15px] flex items-center gap-[15px]">
          <Svg w={16} h={13}><path d="M.7.700h14.600v11.600H.7z" stroke="currentColor" strokeWidth="1.300" /><path d="M2.500 10V8l3-4 2.500 3 1.500-2 4 3.500V10z" fill="currentColor" /></Svg>
          <HalfIcon />
          <TypeIcon s={14} />
          <ShapeIcon />
          <Svg w={14} h={16}><path d="M4.500 5V1.500h5L13 5v9.500H9" stroke="currentColor" strokeWidth="1.400" /><path d="M9 1v4.500h4M.5 7.500h8V15h-8z" fill="currentColor" /></Svg>
        </div>
        <div className="ml-[15px] h-[22px] w-[11px] rounded-full bg-[#3c3c3c]"><div className="h-[10px] w-[10px] rounded-full bg-[#dcdcdc]" /></div>
      </div>
      <div className="flex h-[35px] shrink-0 items-center border-b border-[#3e3e3e] pl-[4px] text-[12px] text-[#8a8a8a]">
        <div className="mt-[3px] flex h-[24px] w-[162px] items-center justify-between rounded-[3px] border border-[#606060] bg-[#4d4d4d] pr-[4px] pl-[10px]">
          <Fit w={41}>Normal</Fit>
          <Chev className="text-[#707070]" />
        </div>
        <Fit w={46} className="mt-[5px] ml-[8px] text-[#959595]">Opacity:</Fit>
        <Pct className="mt-px ml-[5px] h-[20px] w-[63px]" />
      </div>
      <div className="flex h-[36px] shrink-0 items-center pl-[8px] text-[12px] text-[#959595]">
        <Fit w={29} className="mt-[2px]">Lock:</Fit>
        <div className="ml-[12px] flex items-center gap-[11px] text-[#9c9c9c]">
          <Svg w={15} h={15}><path d="M.7.700h13.600v13.600H.7z" stroke="currentColor" strokeWidth="1.400" /><path d="M5.500 1h4v4h-4zM1 5.500h4.500v4H1zM9.500 5.500H14v4H9.500zM5.500 9.500h4V14h-4z" fill="currentColor" /></Svg>
          <BrushIcon s={17} />
          <MoveIcon s={16} />
          <Svg w={17} h={15}><path d="M3.500 0v3M0 3h12l2 2v7.500H3.500V5M14 14v1M16 12.500h1M13 0l3.500 3" stroke="currentColor" strokeWidth="1.300" /></Svg>
          <Svg w={13} h={15} className="ml-[1px]"><path d="M.5 6h12v8.500H.5z" fill="currentColor" /><path d="M3 6V4a3.500 3.500 0 017 0v2" stroke="currentColor" strokeWidth="1.600" /><circle cx="6.500" cy="10" r="1.400" fill="#535353" /></Svg>
        </div>
        <Fit w={19} className="mt-[2px] ml-auto">Fill:</Fit>
        <Pct className="mr-[6px] ml-[5px] h-[20px] w-[63px]" />
      </div>
      <Layers />
      <div className="flex h-[31px] shrink-0 items-center border-t border-[#3a3a3a] text-[#8c8c8c]">
        <Svg w={18} h={10} className="ml-[40px]"><path d="M8 2.500A3.500 3.500 0 001 5a3.500 3.500 0 007 2M10 2.500A3.500 3.500 0 0117 5a3.500 3.500 0 01-7 2M5 5h8" stroke="currentColor" strokeWidth="1.500" /></Svg>
        <span className="ml-[19px] w-[18px] text-[16px] italic">fx</span>
        <Svg w={16} h={13} className="ml-[14px]"><path fillRule="evenodd" d="M0 0h16v13H0zM8 2.500a4 4 0 100 8 4 4 0 000-8z" fill="#9c9c9c" /></Svg>
        <div className="relative ml-[18px] text-[#dcdcdc]"><HalfIcon /><i className="absolute -right-[3px] -bottom-[3px] h-[2px] w-[4px] bg-[#dcdcdc]" /></div>
        <div className="ml-[19px]"><svg width="15" height="13" viewBox="0 0 18 15"><path d="M0 0h8.500l.8 1.500H0zM0 2.300h18V14.500H0z" fill="#dcdcdc" /></svg></div>
        <Svg w={15} h={15} className="ml-[19px]"><path d="M.7.700h13.600v13.600H.7zM7.500 4v7M4 7.500h7" stroke="#dcdcdc" strokeWidth="1.400" /></Svg>
        <Svg w={13} h={15} className="ml-[19px]"><path d="M0 2.500h13M4 2V.7h5V2M1.500 3v11.300h10V3M4.500 5v7.500M6.500 5v7.500M8.500 5v7.500" stroke="currentColor" strokeWidth="1.200" /></Svg>
      </div>
    </div>
  );
}

/* ----------------------------------------------------------------- taskbar */

const Globe = () => (
  <g>
    <circle cx="26" cy="3.500" r="9.800" fill="#62b6d6" />
    <path d="M22-4c4-1 6 1 6 4l4 2-1 5-3 5-5 1-2-5-3-3 1-5z" fill="#4a7f9c" />
    <path d="M25-3l1 3M23 2l2 3M29 7l-1 3" stroke="#24323c" strokeWidth="1.500" fill="none" />
  </g>
);

const apps: { key: string; run?: boolean; active?: boolean; icon: React.ReactNode }[] = [
  { key: "start", icon: <svg width="29" height="29" viewBox="0 0 29 29"><linearGradient id="win" x1="0" y1="0" x2="1" y2="1"><stop stopColor="#7fe4ff" /><stop offset="1" stopColor="#129bf8" /></linearGradient><path d="M0 1a1 1 0 011-1h13v14H0zM15 0h13a1 1 0 011 1v13H15zM0 15h14v14H1a1 1 0 01-1-1zM15 15h14v13a1 1 0 01-1 1H15z" fill="url(#win)" /></svg> },
  { key: "search", icon: <Svg w={28} h={28}><circle cx="15.500" cy="11.500" r="10" fill="#4a4149" stroke="#dde0e4" strokeWidth="2.500" /><path d="M8.500 19L2 26.500" stroke="#dde0e4" strokeWidth="3.500" strokeLinecap="round" /></Svg> },
  { key: "view", icon: <Svg w={31} h={28}><path d="M8.500 0h22v19.500h-22z" fill="#f4f4f4" /><path d="M0 8h22.500v19.500H0z" fill="#707070" /><path d="M8.500 8h14v11.500h-14z" fill="#b4b4b4" /></Svg> },
  { key: "chrome", run: true, icon: <svg width="30" height="30" viewBox="0 0 30 30" className="overflow-visible"><circle cx="15" cy="15" r="15" fill="#fbc116" /><path d="M15 15L2 7.500A15 15 0 0128 7.500z" fill="#e33b2e" /><path d="M2 7.500L8.500 19 15 15l4 7-4.500 8A15 15 0 012 7.500z" fill="#2da94f" /><circle cx="15" cy="15" r="7" fill="#fff" /><circle cx="15" cy="15" r="5.600" fill="#2f7de8" /><Globe /></svg> },
  { key: "phone", icon: <Svg w={28} h={30}><path d="M0 3a3 3 0 013-3h22a3 3 0 013 3v27H0z" fill="#e4e4e4" /><path d="M10 2.300h8" stroke="#888" /><path d="M1.500 5h25v25h-25z" fill="#0c0406" /><path d="M4 15c1-5 6-9 12-9l8-1-3 4c3 2 5 6 4 11-2-2-3-3-5-3-1 3-3 5-7 5-4-1-7-3-9-7z" fill="#d0101c" /><path d="M8 14l5 2 6-3-3 5-4 1zM17 9l4 1" fill="#0c0406" stroke="#0c0406" /><path d="M3 24l4-2 4 4-3 3-5-2z" fill="#a80c18" /><text x="14" y="28.500" fontSize="5.500" fontWeight="700" fontFamily="Open Sans" fill="#fff">msi</text></Svg> },
  { key: "dragon", icon: <Svg w={30} h={30}><path d="M0 0h30v30H0z" fill="#b00d1c" /><path d="M0 6l12-1-3 3 10-1 5 4 5 2-1 4-4-2-2 2 1 2-6-1c-3 0-4 3-3 12H0z" fill="#7a0e20" /><path d="M0 9l8 0 5-2 7 1 4 4 4 3-5-1-1 3-6-2c-5 0-9 3-16 1z" fill="#33131c" /><path d="M0 20l5 2 3 8M0 25l3 5" stroke="#33131c" strokeWidth="1.500" /></Svg> },
  { key: "whatsapp", run: true, icon: <Svg w={28} h={28}><path d="M14.500 0C4 0-1.500 12 3 20.500L.8 27.500l7.400-2C16 30 28 24 28 13.500 28 6 22 0 14.500 0z" fill="#fff" /><circle cx="14.500" cy="13.300" r="11.200" fill="#25c04d" /><path d="M3.500 25l1.500-6 4 4z" fill="#25c04d" /><path d="M10 7c-2 1-2.500 3-1.500 5.500 1.500 3.500 5 6.500 8.500 7.500 2 .3 4-.5 4-3l-3.500-2-1.500 1.500c-2-.8-3.500-2.300-4.500-4.300l1.200-1.700-1.200-3.500z" fill="#fff" /></Svg> },
  { key: "explorer", run: true, icon: <Svg w={31} h={28}><path d="M0 3a2 2 0 012-2h7l3 3h17a1.500 1.500 0 011.500 1.500V12H0z" fill="#e39f07" /><path d="M0 8h9l3-3.500h17A1.500 1.500 0 0130.500 6v20a1.500 1.500 0 01-1.500 1.500H1.500A1.500 1.500 0 010 26z" fill="#ffcd48" /><path d="M5 22a2.500 2.500 0 012.500-2.500h16A2.500 2.500 0 0126 22v5.500H5z" fill="#1478c9" /><path d="M9 23h13" stroke="#0a4b85" strokeWidth="1.500" /></Svg> },
  { key: "opera", icon: <Svg w={29} h={30}><path fillRule="evenodd" d="M14.500.5a14 14.500 0 110 29 14 14.500 0 010-29zm0 4.500C11 5 8.500 9.500 8.500 15s2.500 10 6 10 6-4.500 6-10-2.500-10-6-10z" fill="#e81c2e" /><path fillRule="evenodd" d="M20 2.500c5 2 8.500 7 8.500 12.500S25 25.500 20 27.500c-3.500 1-6-.5-7.500-2.800 5 2 8-4 8-9.700s-3-11.700-8-9.700C14 3 17 1.500 20 2.500z" fill="#ff5252" /></Svg> },
  { key: "xbox", icon: <Svg w={30} h={30}><rect width="30" height="30" rx="3" fill="#107c10" /><circle cx="15" cy="15" r="12" fill="#fff" /><path d="M15 7.500C11.500 4.500 8.500 4 7.500 5L5 7.500c3 1.500 6 5 7 7-3 3.500-5.500 7-5.500 10M15 7.500c3.500-3 6.500-3.500 7.500-2.500L25 7.500c-3 1.500-6 5-7 7 3 3.500 5.500 7 5.500 10M7 24c2-5 5-8.500 8-11 3 2.500 6 6 8 11" stroke="#107c10" strokeWidth="2.200" /></Svg> },
  { key: "music", run: true, icon: <svg width="30" height="30" viewBox="0 0 30 30" className="overflow-visible"><circle cx="15" cy="15" r="15" fill="#ff0404" /><circle cx="15" cy="15" r="7.800" fill="none" stroke="#fff" strokeWidth="1.300" /><path d="M12.500 10.500l7 4.500-7 4.500z" fill="#fff" /><Globe /></svg> },
  { key: "ps", active: true, icon: <PsLogo className="mb-[2px] h-[27px] w-[27px] rounded-[5px] text-[15px]" /> },
  { key: "photos", run: true, icon: <Svg w={28} h={28}><path d="M0 0h28v28H0z" fill="#2fb2ee" /><path d="M12 21l8-8 8 8v7H12z" fill="#7888e0" /><path d="M0 14l5-4 6 0 15 18H0z" fill="#1a4f9c" /><path d="M17 14l4-1 7 8v7h-2z" fill="#6a80e0" /><circle cx="18.700" cy="6.500" r="2.700" fill="#fff" /></Svg> },
];

function Taskbar() {
  return (
    <div className="flex h-[61px] shrink-0 bg-[linear-gradient(90deg,#2a2633_0px,#2c1c3c_110px,#2e1a42_180px,#2e1b38_300px,#2d1b32_430px,#2a1d28_600px,#27201f_760px,#241f22_850px,#2a1c29_960px,#1f202b_1060px,#1d212b_1100px,#222224_1200px,#1f2130_1290px,#221f2c_1370px,#25230f_1440px,#29260f_1540px,#29260f_1670px,#262412_1740px,#222222_1800px,#1d1f22_1850px,#26240f_1885px,#1f2022_1920px)] text-white">
      <div className="flex w-[603px] items-center pl-[26px]">
        <Svg w={30} h={20}>
          <linearGradient id="cl" x1="0" y1="0" x2="0" y2="1"><stop stopColor="#8fb0f0" /><stop offset="1" stopColor="#dfe9fb" /></linearGradient>
          <path d="M7 19.500a6.800 6.800 0 01-.5-13 8.500 8.500 0 0115-1.500 7.500 7.500 0 012.500 14.500z" fill="url(#cl)" />
          <path d="M5 9c3-2 7 0 8 3 1-4 5-5 8-4" stroke="#7b9ce4" />
        </Svg>
        <div className="ml-[9px] flex flex-col items-start text-[15px] leading-[20px]">
          <Fit w={31}>30°C</Fit>
          <Fit w={57} className="text-[#c8c4cc]">Berawan</Fit>
        </div>
      </div>
      <div className="flex items-center">
        {apps.map((a) => (
          <div key={a.key} className="flex h-full w-[55px] items-center justify-center">
            <div className={"relative flex h-[51px] w-[50px] items-center justify-center rounded-[4px] " + (a.active ? "border border-[#3a3a40] bg-[#2f2f35]" : "")}>
              {a.icon}
              {a.run && <i className="absolute bottom-[1px] h-[4px] w-[8px] rounded-full bg-[#9a9a9a]" />}
              {a.active && <i className="absolute bottom-0 h-[4px] w-[20px] rounded-full bg-[#d3cd62]" />}
            </div>
          </div>
        ))}
      </div>
      <div className="mr-[19px] ml-auto flex items-center text-[15px]">
        <Svg w={17} h={10}><path d="M1 9l7.500-7.500L16 9" stroke="#fff" strokeWidth="1.400" /></Svg>
        <Svg w={20} h={14} className="ml-[17px]"><rect x=".7" y=".7" width="18.600" height="12.600" rx="2" stroke="#fff" strokeWidth="1.300" /><path d="M3.500 4h13M5 7h11" stroke="#fff" strokeWidth="1.300" strokeDasharray="1.500 1.500" /><path d="M5 10.500h10" stroke="#fff" /></Svg>
        <Fit w={29} className="ml-[23px]">ENG</Fit>
        <Svg w={20} h={15} className="ml-[23px]"><path d="M1 5.500a13 13 0 0118 0M3.800 8.500a9 9 0 0112.400 0M6.500 11.300a5 5 0 017 0" stroke="#fff" strokeWidth="1.500" /><circle cx="10" cy="13.300" r="1.600" fill="#fff" /></Svg>
        <Svg w={20} h={16} className="ml-[10px]"><path d="M1 5.500h3L8.500 1.500v13L4 10.500H1z" stroke="#fff" strokeWidth="1.300" /><path d="M11 5.500c1.200 1.500 1.200 3.500 0 5" stroke="#fff" strokeWidth="1.300" /><path d="M13.500 3.500c2.500 2.500 2.500 6.500 0 9M16 1.500c4 4 4 9 0 13" stroke="#7a7a70" strokeWidth="1.300" /></Svg>
        <Svg w={20} h={16} className="ml-[10px]"><path d="M8 3.500h7a2 2 0 012 2v7a2 2 0 01-2 2H7a2 2 0 01-2-2V11" stroke="#fff" strokeWidth="1.400" /><path d="M8 6h6.500v6.500h-7zM18 7h1.500v4H18zM0 2.500h1.300V0h1.200v2.500h1V0h1.200v2.500H6V6c0 2-1 2.500-2.300 2.500V11H2.300V8.500C1 8.500 0 8 0 6z" fill="#fff" /></Svg>
        <div className="mt-[-1px] ml-[19px] flex w-[65px] flex-col items-end leading-[20px]">
          <Fit w={59}>12:31 AM</Fit>
          <Fit w={65}>11/3/2022</Fit>
        </div>
      </div>
    </div>
  );
}

export default function App() {
  return (
    <div className="flex h-[1080px] w-[1920px] flex-col overflow-hidden bg-[#383838] font-['Noto_Sans','Open_Sans',sans-serif] leading-[18px]">
      <MenuBar />
      <div className="h-px shrink-0 bg-[#3a3a3a]" />
      <OptionsBar />
      <div className="h-px shrink-0 bg-[#383838]" />
      <div className="flex min-h-0 flex-1">
        <Toolbar />
        <DocumentArea />
        <div className="flex w-[349px] flex-col border-l-[3px] border-[#3c3c3c]">
          <div className="flex h-[14px] shrink-0 items-center justify-between bg-[#424242] pr-[9px] pl-[32px]">
            <DoubleChev left />
            <DoubleChev />
          </div>
          <div className="mt-px flex min-h-0 flex-1 gap-[3px]">
            <IconStrip />
            <LayersPanel />
          </div>
        </div>
      </div>
      <Taskbar />
    </div>
  );
}
